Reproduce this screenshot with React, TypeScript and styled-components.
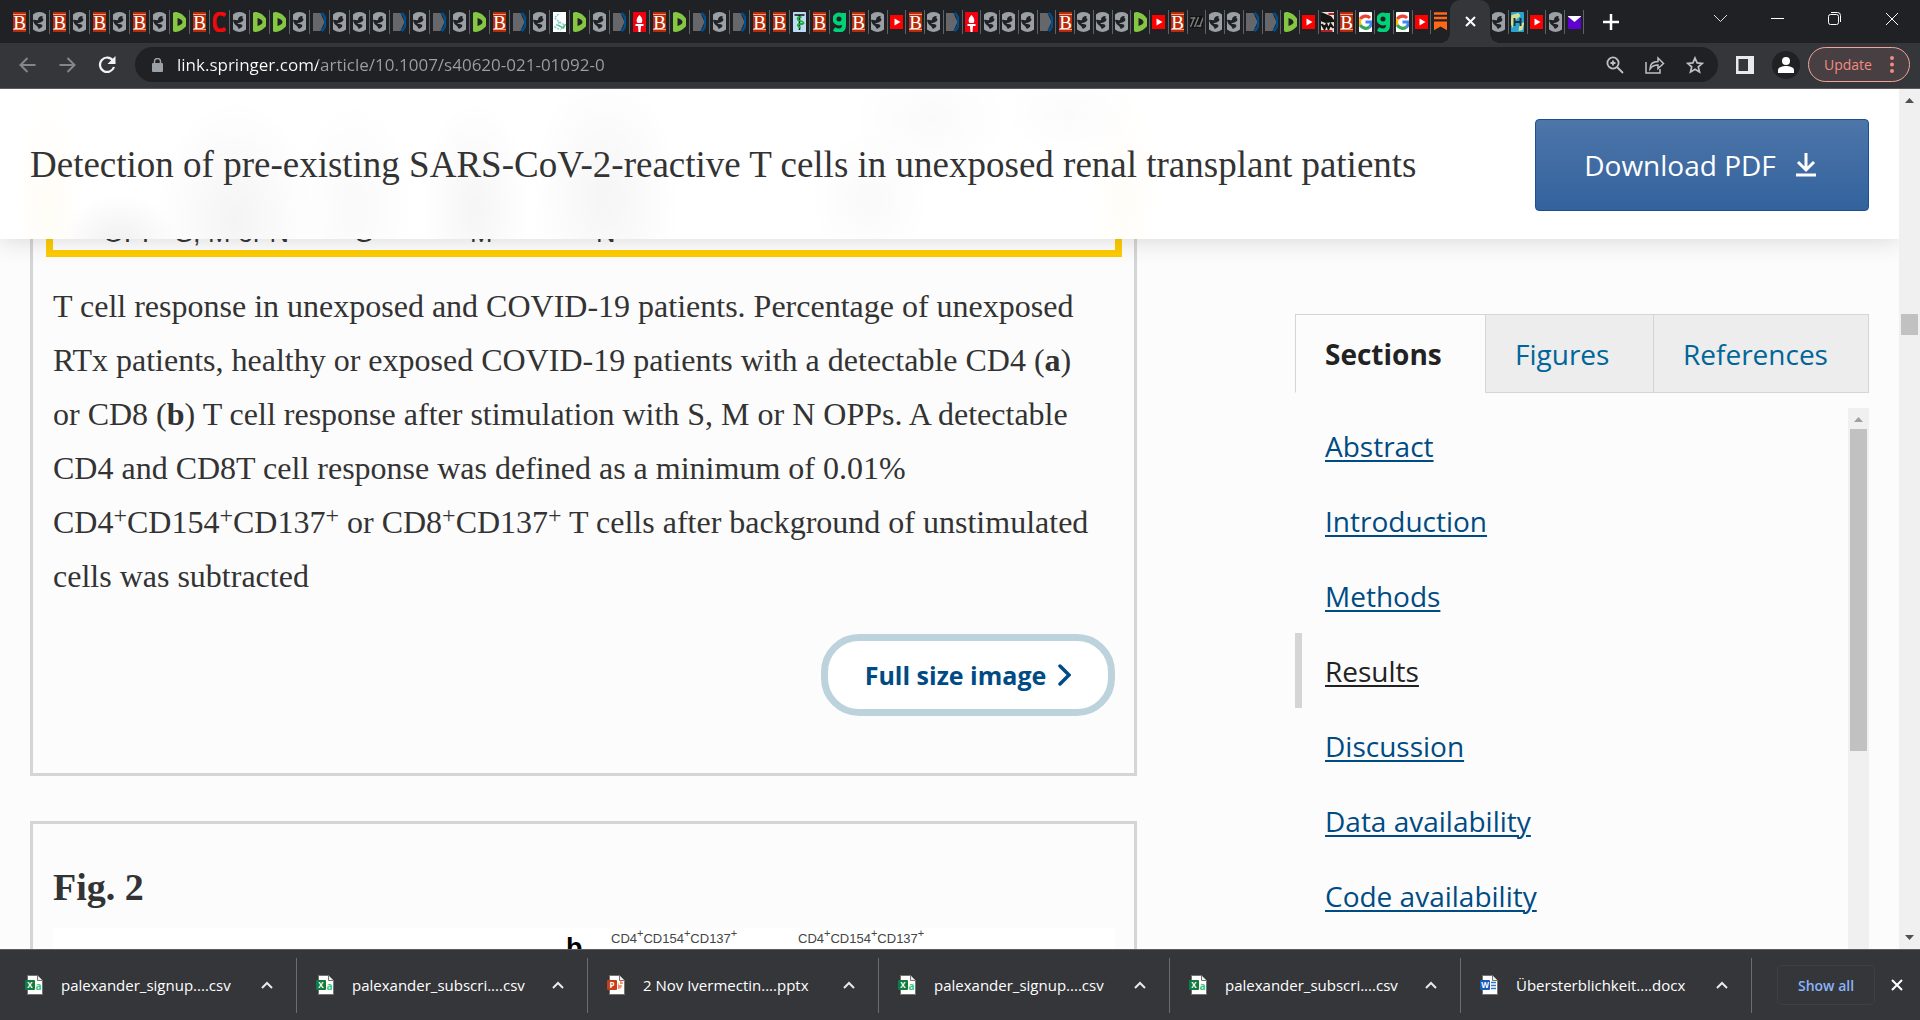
import React from 'react';
import styled, { createGlobalStyle } from 'styled-components';

const SANS = `'Open Sans', 'Noto Sans', sans-serif`;
const SERIF = `'Liberation Serif', 'Times New Roman', serif`;
const ARIAL = `'Liberation Sans', Arial, sans-serif`;

const Global = createGlobalStyle`
  *, *::before, *::after { box-sizing: border-box; }
  html, body { margin: 0; padding: 0; }
  body { font-family: ${SANS}; color: #333; background: #fcfcfc; overflow: hidden; }
  button { font: inherit; color: inherit; background: none; border: 0; padding: 0; margin: 0; cursor: pointer; }
`;

const Window = styled.div`
  display: flex;
  flex-direction: column;
  height: 100vh;
`;

/* ---------- tab strip ---------- */

const TabStrip = styled.div`
  display: flex;
  align-items: stretch;
  height: 43px;
  flex: none;
  padding-left: 10px;
  background: #202124;
`;

const TabGroup = styled.div<{ $width: number }>`
  display: flex;
  align-items: center;
  width: ${(p) => p.$width}px;
`;

const Tab = styled.button`
  flex: 1 1 0;
  min-width: 0;
  height: 24px;
  display: flex;
  align-items: center;
  justify-content: center;
  border-right: 1px solid #5f6368;

  &.bare { border-right-color: transparent; }
`;

const Favicon = styled.svg`
  width: 13px;
  height: 20px;
  display: block;
`;

const ActiveTab = styled.button`
  position: relative;
  width: 40px;
  display: grid;
  place-items: center;
  background: #35363a;
  border-radius: 10px 10px 0 0;

  &::before, &::after {
    content: '';
    position: absolute;
    bottom: 0;
    width: 10px;
    height: 10px;
  }
  &::before { right: 100%; background: radial-gradient(circle at 0 0, transparent 10px, #35363a 10px); }
  &::after { left: 100%; background: radial-gradient(circle at 100% 0, transparent 10px, #35363a 10px); }
`;

const NewTab = styled.button`
  width: 54px;
  display: grid;
  place-items: center;
`;

const WindowControls = styled.div`
  margin-left: auto;
  display: flex;
`;

const WindowButton = styled.button`
  width: 57px;
  height: 37px;
  display: grid;
  place-items: center;
`;

type Kind =
  | 'B' | 'S' | 'D' | 'C' | 'P' | 'K' | 'T' | 'M' | 'g' | 'Y' | 'H' | 'F' | 'G' | 'U' | 'E' | 'V';

const icons: Record<Kind, { name: string; art: React.ReactNode }> = {
  B: {
    name: 'Brownstone',
    art: (
      <>
        <rect width="20" height="20" fill="#b92b08" />
        <path d="M2 2.500h16M2 17.500h16" stroke="#e5a48f" strokeWidth="1" />
        <text x="10" y="16.500" fontSize="19" fontFamily="Liberation Serif, serif" textAnchor="middle" fill="#fff">B</text>
      </>
    ),
  },
  S: {
    name: 'Web page',
    art: (
      <>
        <circle cx="10" cy="10" r="10" fill="#9aa0a6" />
        <path d="M3.500 8c2-1 3 1 5 0 0-3 2-4 4-4 1 0 1 1 0 2 1 0 2 1 1 3-2 1-3 2-5 2-1 0-1 1 1 1 3 0 4 1 3 3-1 1-2 1-3 2-1-1-1-2-2-3-2-1-3.500-3-4-6z" fill="#202124" />
      </>
    ),
  },
  D: {
    name: 'Rumble',
    art: (
      <path fillRule="evenodd" fill="#85c742" d="M3 2c0-1.500 2-2 4-2 5 1 8 4 10.500 8 1 2 1 3 0 5-3 4-6 6-11 7-2 0-3.500-.5-3.500-2zM8 6v8c4-1 5-3 5-4s-1-3-5-4z" />
    ),
  },
  C: {
    name: 'Channel',
    art: <path d="M16 3.500C13 1 9 1 7 3 4.500 6 4.500 14 7 17c2 2 6 2 9-.5" fill="none" stroke="#f00a0a" strokeWidth="4" />,
  },
  P: {
    name: 'Publisher',
    art: (
      <>
        <path d="M2 1h9l4 9-4 9H2z" fill="#66676b" />
        <path d="M12 1c3 2 4 5 4 9s-1 7-4 9" fill="none" stroke="#00508f" strokeWidth="2.500" />
      </>
    ),
  },
  K: {
    name: 'Network',
    art: (
      <>
        <rect width="20" height="20" fill="#fff" />
        <path d="M9 2L5 6l5 4-5 5M10 10l5 3-4 5M5 15l6 3" stroke="#7fd0dc" strokeWidth="1.500" fill="none" strokeDasharray="2 1" />
        <path d="M8 13l6 3 2-4" stroke="#63c07c" strokeWidth="1.500" fill="none" />
      </>
    ),
  },
  T: {
    name: 'Torch',
    art: (
      <>
        <rect width="20" height="20" fill="#f20010" />
        <path d="M10 3c2 2 4 5 2 8H8c-2-3 0-6 2-8zM6 12h8v2H6zM8.500 14h3l-.5 6H9z" fill="#fff" />
      </>
    ),
  },
  M: {
    name: 'Medicine',
    art: (
      <>
        <rect width="20" height="20" rx="5" fill="#bcdcf5" />
        <path d="M5 3h10M10 3v15" stroke="#111" strokeWidth="1.500" />
        <path d="M12 5c-5 0-5 3-1 4s4 3 0 3-3 2 0 4" stroke="#17b32e" strokeWidth="1.800" fill="none" />
      </>
    ),
  },
  g: {
    name: 'Gab',
    art: (
      <g fill="none" stroke="#00d178" strokeWidth="4">
        <circle cx="9.500" cy="7" r="4.500" />
        <path d="M14.500 1v12c0 4-2 5.500-5 5.500-2 0-3.500-.5-5-1.500" />
      </g>
    ),
  },
  Y: {
    name: 'YouTube',
    art: (
      <>
        <rect x="0" y="3" width="20" height="14" rx="2" fill="#f00" />
        <path d="M8 6.500l6 3.500-6 3.500z" fill="#fff" />
      </>
    ),
  },
  H: {
    name: 'Journal',
    art: (
      <>
        <rect y="4" width="20" height="12" fill="#111" />
        <path d="M4 15L8 5M8 15l4-10M13 15l4-10M4 6h5M10 14h5" stroke="#7b7b7b" strokeWidth="1.500" />
      </>
    ),
  },
  F: {
    name: 'Flag news',
    art: (
      <>
        <rect width="20" height="20" fill="#e9dfd6" />
        <path d="M3 1l10 4 3 4-8 1-5-2zM4 12l3 5 2-5 2 5 2-5 3 4" stroke="#151515" strokeWidth="2" fill="#151515" />
        <path d="M11 2h7M3 19h12" stroke="#b2202a" strokeWidth="2" />
      </>
    ),
  },
  G: {
    name: 'Google',
    art: (
      <>
        <rect width="20" height="20" rx="5" fill="#fff" />
        <g fill="none" strokeWidth="3.200">
          <path d="M14.500 6A6.200 6.200 0 0 0 4.800 7" stroke="#ea4335" />
          <path d="M4.800 7a6.200 6.200 0 0 0 0 6" stroke="#fbbc05" />
          <path d="M4.800 13a6.200 6.200 0 0 0 9.200 2" stroke="#34a853" />
          <path d="M14 15a6.200 6.200 0 0 0 2-5h-6" stroke="#4285f4" />
        </g>
      </>
    ),
  },
  U: {
    name: 'Substack',
    art: (
      <>
        <path d="M2 1.500h16M2 6h16" stroke="#ff6719" strokeWidth="2.500" />
        <path d="M2 9.500h16V19l-8-4.500L2 19z" fill="#ff6719" />
      </>
    ),
  },
  E: {
    name: 'Earth',
    art: (
      <>
        <rect width="20" height="20" rx="5" fill="#2aa3cf" />
        <path d="M4 3l7-2 2 3-5 4-3 8-2-5zM12 12l5-2-2 8-4 1z" fill="#d4e08a" />
        <path d="M7 6v8M13 6v8M7 10h6" stroke="#15324a" strokeWidth="2" />
      </>
    ),
  },
  V: {
    name: 'Mail',
    art: (
      <>
        <rect x="1" y="4" width="18" height="13" fill="#5f01d1" />
        <path d="M3 4h14l-7 6z" fill="#fff" />
      </>
    ),
  },
};

const WIDE_TABS = 'BSBSBSBSDBCSDDSPSSSPSPSDBPSKDSPTBDPSPBBMBg'.split('') as Kind[];
const NARROW_TABS = 'BSYBSPTSSSPBSSSDYBHSSPPDYFBGgGYU'.split('') as Kind[];
const RIGHT_TABS = 'SEYSV'.split('') as Kind[];

const Tabs = ({ kinds, width, bareEnd }: { kinds: Kind[]; width: number; bareEnd?: boolean }) => (
  <TabGroup $width={width}>
    {kinds.map((k, i) => (
      <Tab key={i} aria-label={icons[k].name} className={bareEnd && i === kinds.length - 1 ? 'bare' : undefined}>
        <Favicon viewBox="0 0 20 20" preserveAspectRatio="xMidYMid slice" aria-hidden="true">
          {icons[k].art}
        </Favicon>
      </Tab>
    ))}
  </TabGroup>
);

/* ---------- toolbar ---------- */

const Toolbar = styled.div`
  display: flex;
  align-items: center;
  height: 46px;
  flex: none;
  padding: 0 10px 2px 7px;
  background: #35363a;
  border-bottom: 1px solid #5b5c60;
`;

const ToolButton = styled.button<{ $width?: number }>`
  width: ${(p) => p.$width ?? 40}px;
  height: 36px;
  display: grid;
  place-items: center;
  flex: none;
`;

const AddressBar = styled.form`
  flex: 1;
  display: flex;
  align-items: center;
  height: 35px;
  margin-left: 8px;
  padding: 0 3px 0 17px;
  background: #202124;
  border-radius: 18px;
`;

const AddressInput = styled.input`
  flex: 1;
  min-width: 0;
  height: 30px;
  margin-left: 14px;
  padding: 0;
  border: 0;
  outline: 0;
  font: 17px/30px ${SANS};
  color: transparent;
  background: linear-gradient(90deg, #fff 141px, #9aa0a6 141px);
  background-clip: text;
  -webkit-background-clip: text;
`;

const Avatar = styled.span`
  width: 28px;
  height: 28px;
  border-radius: 50%;
  background: #202124;
  display: grid;
  place-items: center;
`;

const UpdateButton = styled.button`
  display: flex;
  align-items: center;
  justify-content: space-between;
  width: 102px;
  height: 35px;
  margin-left: 8px;
  padding: 0 15px 0 15px;
  border: 1px solid #f0a49d;
  border-radius: 18px;
  background: #483f42;
  color: #f28b82;
  font-size: 14px;
`;

/* ---------- page ---------- */

const Viewport = styled.div`
  flex: 1;
  min-height: 0;
  display: flex;
`;

const Page = styled.div`
  flex: 1;
  min-width: 0;
  display: flex;
  flex-direction: column;
  background: #fcfcfc;
  overflow: hidden;
`;

const StickyHeader = styled.header`
  position: relative;
  z-index: 2;
  flex: none;
  display: flex;
  align-items: center;
  justify-content: space-between;
  height: 150px;
  padding: 2px 30px 0;
  box-shadow: 0 0 24px rgba(51, 51, 51, 0.2);
  background:
    radial-gradient(60px 50px at 120px 155px, rgba(0, 0, 0, 0.06), transparent),
    radial-gradient(80px 120px at 235px 130px, rgba(0, 0, 0, 0.045), transparent),
    radial-gradient(60px 110px at 355px 120px, rgba(0, 0, 0, 0.025), transparent),
    radial-gradient(55px 110px at 475px 120px, rgba(0, 0, 0, 0.04), transparent),
    radial-gradient(75px 130px at 605px 110px, rgba(0, 0, 0, 0.04), transparent),
    radial-gradient(60px 70px at 870px 110px, rgba(0, 0, 0, 0.025), transparent),
    radial-gradient(80px 60px at 930px 30px, rgba(0, 0, 0, 0.02), transparent),
    radial-gradient(70px 45px at 1070px 25px, rgba(0, 0, 0, 0.015), transparent),
    radial-gradient(35px 110px at 48px 110px, rgba(255, 190, 0, 0.04), transparent),
    radial-gradient(35px 110px at 1125px 110px, rgba(255, 190, 0, 0.03), transparent),
    #fff;
`;

const ArticleTitle = styled.span`
  font: 37px/54px ${SERIF};
  color: #333;
  white-space: nowrap;
`;

const DownloadPdf = styled.a`
  display: flex;
  align-items: center;
  justify-content: center;
  gap: 20px;
  width: 334px;
  height: 92px;
  padding-right: 4px;
  border: 1px solid #1a4f93;
  border-radius: 4px;
  background: linear-gradient(#4d76a9, #33629d);
  color: #fff;
  font-size: 28px;
  text-decoration: none;
`;

const Columns = styled.div`
  flex: 1;
  min-height: 0;
  display: flex;
  justify-content: space-between;
  padding: 0 30px;
`;

const Article = styled.main`
  width: 1107px;
  display: flex;
  flex-direction: column;
  gap: 45px;
`;

const FigureCard = styled.figure<{ $open?: boolean }>`
  flex: none;
  margin: 0;
  padding: 0 19px 57px 20px;
  border: 3px solid #d5d5d5;
  border-top-width: ${(p) => (p.$open ? 0 : 3)}px;
`;

const FocusedImage = styled.a`
  display: grid;
  grid-template-columns: 252px 115px 126px 1fr;
  align-content: end;
  height: 11px;
  padding-left: 50px;
  overflow: hidden;
  background: #fff;
  outline: 7px solid #fc0;
  color: #333;
  font: 27px/34px ${ARIAL};
  text-decoration: none;
`;

const Caption = styled.figcaption`
  padding-top: 29px;
  font: 32px/54px ${SERIF};

  sup { font-size: 24px; line-height: 0; vertical-align: 10px; }
`;

const ButtonRow = styled.div`
  display: flex;
  justify-content: flex-end;
  margin-top: 31px;
`;

const FullSize = styled.a`
  display: flex;
  align-items: center;
  justify-content: center;
  gap: 12px;
  width: 294px;
  height: 82px;
  border: 7px solid #bcd2dd;
  border-radius: 38px;
  background: #fff;
  color: #004b83;
  font-size: 25px;
  font-weight: 700;
  text-decoration: none;
`;

const FigureTitle = styled.h3`
  margin: 0;
  padding: 36px 0 14px;
  font: bold 38px/54px ${SERIF};
`;

const PlotImage = styled.div`
  display: grid;
  grid-template-columns: 45px 187px 1fr;
  align-items: start;
  height: 400px;
  padding: 1px 0 0 513px;
  background: #fff;
  color: #444;
  font: 13px/20px ${ARIAL};

  sup { font-size: 11px; line-height: 0; vertical-align: 6px; }
`;

const PanelLetter = styled.b`
  color: #000;
  font-size: 27px;
  line-height: 38px;
`;

/* ---------- sidebar ---------- */

const Sidebar = styled.aside`
  width: 574px;
  display: flex;
  flex-direction: column;
  padding-top: 75px;
`;

const TabList = styled.div`
  display: flex;
  flex: none;
  height: 79px;
`;

const SideTab = styled.button<{ $active?: boolean }>`
  flex: ${(p) => (p.$active ? '0 0 190px' : '1 1 auto')};
  padding: 0 29px;
  text-align: left;
  font-size: 28px;
  font-weight: ${(p) => (p.$active ? 700 : 400)};
  color: ${(p) => (p.$active ? '#222' : '#069')};
  background: ${(p) => (p.$active ? 'transparent' : '#ededed')};
  border: 1px solid #d5d5d5;
  border-right-width: 0;
  ${(p) => (p.$active ? 'border-bottom-color: transparent;' : '')}

  &:nth-child(2) { flex: 0 0 168px; }
  &:last-child { border-right-width: 1px; }
`;

const ListBox = styled.div`
  flex: 1;
  min-height: 0;
  display: flex;
  margin-top: 15px;
`;

const LinkList = styled.ul`
  flex: 1;
  margin: 0;
  padding: 0;
  list-style: none;
  overflow: hidden;
`;

const LinkItem = styled.li<{ $current?: boolean }>`
  display: flex;
  align-items: center;
  height: 75px;
  padding-left: 23px;
  border-left: 7px solid ${(p) => (p.$current ? '#d5d5d5' : 'transparent')};

  a {
    font-size: 28px;
    color: ${(p) => (p.$current ? '#222' : '#004b83')};
    text-decoration-thickness: 2px;
    text-underline-offset: 3px;
  }
`;

/* ---------- scrollbars ---------- */

const Track = styled.div`
  width: 21px;
  flex: none;
  display: flex;
  flex-direction: column;
  align-items: center;
  background: #f0f0f0;
`;

const Arrow = styled.svg`
  width: 21px;
  height: 21px;
  flex: none;
`;

const Thumb = styled.div<{ $top?: number; $height: number }>`
  width: 17px;
  flex: none;
  height: ${(p) => p.$height}px;
  margin: ${(p) => p.$top ?? 0}px 0 auto;
  background: #c1c1c1;
`;

/* ---------- download shelf ---------- */

const Shelf = styled.footer`
  display: flex;
  align-items: center;
  flex: none;
  height: 71px;
  padding: 0 14px 0 6px;
  background: #35363a;
  border-top: 1px solid #5b5c60;
`;

const ShelfItem = styled.div`
  flex: 0 1 291px;
  min-width: 0;
  display: flex;
  align-items: center;
  height: 55px;
  padding-left: 19px;
  border-right: 1px solid #6b6c70;
`;

const FileButton = styled.button`
  flex: 1;
  display: flex;
  align-items: center;
  gap: 18px;
  color: #fff;
  font-size: 15px;
  white-space: nowrap;
`;

const Caret = styled.button`
  width: 30px;
  height: 30px;
  margin-right: 14px;
  display: grid;
  place-items: center;
`;

const ShowAll = styled.button`
  width: 98px;
  height: 40px;
  margin: 0 13px 0 auto;
  border: 1px solid #3f4045;
  border-radius: 5px;
  color: #8ab4f8;
  font-size: 14px;
  font-weight: 600;
`;

type FileKind = 'excel' | 'powerpoint' | 'word';

const fileStyle: Record<FileKind, { letter: string; color: string; mark: React.ReactNode }> = {
  excel: {
    letter: 'X',
    color: '#107c41',
    mark: <text x="10.500" y="14.500" fontSize="10" fontWeight="700" fontFamily="Open Sans, sans-serif" fill="#33c481">a</text>,
  },
  powerpoint: {
    letter: 'P',
    color: '#c43e1c',
    mark: <path d="M11 7v7a4 4 0 0 0 4-4h-3zM13 6v3h3a3 3 0 0 0-3-3z" fill="#ff8f6b" />,
  },
  word: {
    letter: 'W',
    color: '#185abd',
    mark: <path d="M11 7.500h5M11 10.500h5M11 13.500h5" stroke="#2b7cd3" strokeWidth="1.500" />,
  },
};

const FileIcon = ({ kind }: { kind: FileKind }) => {
  const f = fileStyle[kind];
  return (
    <svg width="18" height="20" viewBox="0 0 18 20" aria-hidden="true">
      <path d="M2.500.5h10l5 5v14h-15z" fill="#fff" stroke="#77716a" />
      <path d="M12.500.5v5h5" fill="#eee" stroke="#77716a" />
      {f.mark}
      <rect x="0" y="5" width="10" height="10" rx="1" fill={f.color} />
      <text x="5" y="13" fontSize="8" fontWeight="700" fontFamily="Open Sans, sans-serif" textAnchor="middle" fill="#fff">{f.letter}</text>
    </svg>
  );
};

const files: { kind: FileKind; name: string }[] = [
  { kind: 'excel', name: 'palexander_signup....csv' },
  { kind: 'excel', name: 'palexander_subscri....csv' },
  { kind: 'powerpoint', name: '2 Nov Ivermectin....pptx' },
  { kind: 'excel', name: 'palexander_signup....csv' },
  { kind: 'excel', name: 'palexander_subscri....csv' },
  { kind: 'word', name: 'Übersterblichkeit....docx' },
];

const sections = ['Abstract', 'Introduction', 'Methods', 'Results', 'Discussion', 'Data availability', 'Code availability'];

const Cross = ({ size, stroke, width }: { size: number; stroke: string; width: number }) => (
  <svg width={size} height={size} viewBox={`0 0 ${size} ${size}`} aria-hidden="true">
    <path d={`M1 1L${size - 1} ${size - 1}M${size - 1} 1L1 ${size - 1}`} stroke={stroke} strokeWidth={width} />
  </svg>
);

const MarkerLabel = () => (
  <span>CD4<sup>+</sup>CD154<sup>+</sup>CD137<sup>+</sup></span>
);

export default function App() {
  return (
    <>
      <Global />
      <Window>
        <TabStrip>
          <Tabs kinds={WIDE_TABS} width={840} />
          <Tabs kinds={NARROW_TABS} width={600} bareEnd />
          <ActiveTab aria-label="Close tab"><Cross size={11} stroke="#fff" width={2} /></ActiveTab>
          <Tabs kinds={RIGHT_TABS} width={94} />
          <NewTab aria-label="New tab">
            <svg width="16" height="16" viewBox="0 0 16 16"><path d="M8 0v16M0 8h16" stroke="#fff" strokeWidth="2.500" /></svg>
          </NewTab>
          <WindowControls>
            <WindowButton aria-label="Search tabs">
              <svg width="15" height="9" viewBox="0 0 15 9"><path d="M1 1l6.500 6.500L14 1" fill="none" stroke="#ddd" /></svg>
            </WindowButton>
            <WindowButton aria-label="Minimize">
              <svg width="13" height="13" viewBox="0 0 13 13"><path d="M0 6.500h13" stroke="#fff" /></svg>
            </WindowButton>
            <WindowButton aria-label="Restore">
              <svg width="13" height="13" viewBox="0 0 13 13" fill="none" stroke="#fff"><rect x=".5" y="2.500" width="10" height="10" rx="2" /><path d="M3 .5h6.500a3 3 0 0 1 3 3V10" /></svg>
            </WindowButton>
            <WindowButton aria-label="Close"><Cross size={14} stroke="#fff" width={1} /></WindowButton>
          </WindowControls>
        </TabStrip>

        <Toolbar>
          <ToolButton aria-label="Back">
            <svg width="17" height="16" viewBox="0 0 17 16" fill="none" stroke="#85868a" strokeWidth="2"><path d="M16.500 8H1.500M8.500 1L1.500 8l7 7" /></svg>
          </ToolButton>
          <ToolButton aria-label="Forward">
            <svg width="17" height="16" viewBox="0 0 17 16" fill="none" stroke="#85868a" strokeWidth="2"><path d="M.5 8h15M8.500 1l7 7-7 7" /></svg>
          </ToolButton>
          <ToolButton aria-label="Reload">
            <svg width="18" height="18" viewBox="0 0 18 18"><path d="M15 4.500A7.200 7.200 0 1 0 16 11" fill="none" stroke="#f1f3f4" strokeWidth="2.200" /><path d="M17.500 0v8h-8z" fill="#f1f3f4" /></svg>
          </ToolButton>
          <AddressBar>
            <svg width="11" height="14" viewBox="0 0 11 14" aria-hidden="true"><rect y="5" width="11" height="9" rx="1" fill="#9aa0a6" /><path d="M2.500 6V3.500a3 3 0 0 1 6 0V6" fill="none" stroke="#9aa0a6" strokeWidth="1.500" /></svg>
            <AddressInput aria-label="Address" defaultValue="link.springer.com/article/10.1007/s40620-021-01092-0" />
            <ToolButton type="button" aria-label="Zoom">
              <svg width="18" height="18" viewBox="0 0 18 18" fill="none" stroke="#bdc1c6" strokeWidth="1.800"><circle cx="7" cy="7" r="5.600" /><path d="M11 11l6 6M4.500 7h5M7 4.500v5" /></svg>
            </ToolButton>
            <ToolButton type="button" aria-label="Share">
              <svg width="20" height="18" viewBox="0 0 20 18" fill="none" stroke="#bdc1c6" strokeWidth="1.500"><path d="M1 6v11h14v-4" /><path d="M5 13c0-5 3-7.500 8-7.500V2l5.500 5.500L13 12.500V9c-4 0-6 1-8 4z" /></svg>
            </ToolButton>
            <ToolButton type="button" aria-label="Bookmark">
              <svg width="18" height="18" viewBox="0 0 18 18" fill="none" stroke="#bdc1c6" strokeWidth="1.700"><path d="M9 2l2.100 4.900 5.200.5-4 3.500 1.200 5.100L9 13.300 4.500 16l1.200-5.100-4-3.500 5.200-.5z" /></svg>
            </ToolButton>
          </AddressBar>
          <ToolButton $width={54} aria-label="Side panel">
            <svg width="18" height="18" viewBox="0 0 18 18"><path fillRule="evenodd" d="M0 0h18v18H0zM2.500 3v12H12V3z" fill="#e8eaed" /></svg>
          </ToolButton>
          <ToolButton $width={28} aria-label="Profile">
            <Avatar><svg width="16" height="16" viewBox="0 0 16 16" fill="#fff"><circle cx="8" cy="4" r="4" /><path d="M0 16v-3c0-3 5-4 8-4s8 1 8 4v3z" /></svg></Avatar>
          </ToolButton>
          <UpdateButton>
            Update
            <svg width="4" height="17" viewBox="0 0 4 17" fill="#f28b82"><circle cx="2" cy="2" r="2" /><circle cx="2" cy="8.500" r="2" /><circle cx="2" cy="15" r="2" /></svg>
          </UpdateButton>
        </Toolbar>

        <Viewport>
          <Page>
            <StickyHeader>
              <ArticleTitle>Detection of pre-existing SARS-CoV-2-reactive T cells in unexposed renal transplant patients</ArticleTitle>
              <DownloadPdf href="#pdf">
                Download PDF
                <svg width="20" height="24" viewBox="0 0 20 24" fill="none" stroke="#fff" strokeWidth="3" aria-hidden="true"><path d="M10 0v16M2 9l8 8 8-8M0 22h20" /></svg>
              </DownloadPdf>
            </StickyHeader>
            <Columns>
              <Article>
                <FigureCard $open>
                  <FocusedImage href="#figure-1">
                    <span>OPP&nbsp; S, M or N</span><span>S</span><span>M</span><span>N</span>
                  </FocusedImage>
                  <Caption>
                    T cell response in unexposed and COVID-19 patients. Percentage of unexposed<br />
                    RTx patients, healthy or exposed COVID-19 patients with a detectable CD4 (<b>a</b>)<br />
                    or CD8 (<b>b</b>) T cell response after stimulation with S, M or N OPPs. A detectable<br />
                    CD4 and CD8T cell response was defined as a minimum of 0.01%<br />
                    CD4<sup>+</sup>CD154<sup>+</sup>CD137<sup>+</sup> or CD8<sup>+</sup>CD137<sup>+</sup> T cells after background of unstimulated<br />
                    cells was subtracted
                  </Caption>
                  <ButtonRow>
                    <FullSize href="#full-size">
                      Full size image
                      <svg width="13" height="22" viewBox="0 0 13 22" aria-hidden="true"><path d="M2 2l9 9-9 9" fill="none" stroke="#004b83" strokeWidth="3.500" strokeLinecap="round" /></svg>
                    </FullSize>
                  </ButtonRow>
                </FigureCard>
                <FigureCard>
                  <FigureTitle>Fig. 2</FigureTitle>
                  <PlotImage><PanelLetter>b</PanelLetter><MarkerLabel /><MarkerLabel /></PlotImage>
                </FigureCard>
              </Article>
              <Sidebar>
                <TabList role="tablist">
                  <SideTab role="tab" aria-selected="true" $active>Sections</SideTab>
                  <SideTab role="tab" aria-selected="false">Figures</SideTab>
                  <SideTab role="tab" aria-selected="false">References</SideTab>
                </TabList>
                <ListBox>
                  <LinkList>
                    {sections.map((s) => (
                      <LinkItem key={s} $current={s === 'Results'}>
                        <a href={`#${s.toLowerCase().replace(' ', '-')}`}>{s}</a>
                      </LinkItem>
                    ))}
                  </LinkList>
                  <Track>
                    <Arrow viewBox="0 0 21 21"><path d="M6 14l4.500-5 4.500 5z" fill="#a0a0a0" /></Arrow>
                    <Thumb $height={322} />
                  </Track>
                </ListBox>
              </Sidebar>
            </Columns>
          </Page>
          <Track>
            <Arrow viewBox="0 0 21 21"><path d="M6 14l4.500-5 4.500 5z" fill="#505050" /></Arrow>
            <Thumb $top={204} $height={21} />
            <Arrow viewBox="0 0 21 21"><path d="M6 7l4.500 5L15 7z" fill="#505050" /></Arrow>
          </Track>
        </Viewport>

        <Shelf>
          {files.map((f, i) => (
            <ShelfItem key={i}>
              <FileButton><FileIcon kind={f.kind} />{f.name}</FileButton>
              <Caret aria-label="More options">
                <svg width="12" height="8" viewBox="0 0 12 8"><path d="M1 7l5-5 5 5" fill="none" stroke="#e8eaed" strokeWidth="2" /></svg>
              </Caret>
            </ShelfItem>
          ))}
          <ShowAll>Show all</ShowAll>
          <ToolButton $width={18} aria-label="Close downloads"><Cross size={12} stroke="#fff" width={2} /></ToolButton>
        </Shelf>
      </Window>
    </>
  );
}
